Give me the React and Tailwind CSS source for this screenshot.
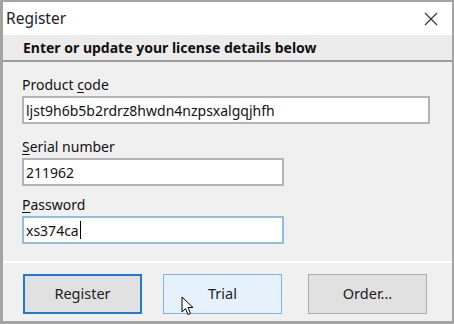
import React from "react";

const font = { fontFamily: '"Noto Sans", "Open Sans", sans-serif' };

function Field({ label, hotkey, rest, value, className = "", focused = false, caret = false }) {
  return (
    <div className={className}>
      <div className="text-[14px] leading-[18px] text-[#111] h-[18px]">
        {label.slice(0, hotkey)}
        <span className="underline underline-offset-2">{label[hotkey]}</span>
        {label.slice(hotkey + 1)}
      </div>
      <div
        className={`mt-[2px] h-[28px] bg-white flex items-center px-[2px] text-[14px] text-[#111] ${
          focused ? "border-2 border-[#8fbfdc]" : "border-2 border-[#b4b4b4]"
        } ${rest}`}
      >
        <span>{value}</span>
        {caret && <span className="inline-block w-px h-[18px] bg-black ml-px" />}
      </div>
    </div>
  );
}

export default function App() {
  return (
    <div style={font} className="w-[454px] h-[324px] bg-[#a3a3a3] pt-[2px] pl-[3px] pb-[3px] pr-[2px] overflow-hidden">
      <div className="h-full bg-[#f0f0f0] flex flex-col">
        {/* title bar */}
        <div className="h-[33px] bg-white flex items-center justify-between pl-[3px] pr-[12px]">
          <span className="text-[15.5px] text-[#222] leading-none">Register</span>
          <svg width="14" height="14" viewBox="0 0 14 14" className="mr-[2px]">
            <path d="M1 1 L13 13 M13 1 L1 13" stroke="#333" strokeWidth="1.2" />
          </svg>
        </div>

        {/* header band */}
        <div className="h-[27px] border-b-2 border-[#9c9c9c] bg-[#ececec] flex items-center pl-[20px]">
          <span className="text-[14px] font-bold text-[#111]">Enter or update your license details below</span>
        </div>

        {/* fields */}
        <div className="flex flex-col pl-[19px] pt-[14px]">
          <Field label="Product code" hotkey={8} value="ljst9h6b5b2rdrz8hwdn4nzpsxalgqjhfh" rest="w-[408px]" />
          <Field label="Serial number" hotkey={0} value="211962" rest="w-[262px]" className="mt-[14px]" />
          <Field label="Password" hotkey={0} value="xs374ca" rest="w-[262px]" className="mt-[10px]" focused caret />
        </div>

        {/* separator */}
        <div className="mt-[17px] h-[2px] bg-white" />

        {/* buttons */}
        <div className="flex items-start pl-[20px] pt-[11px]">
          <button className="w-[119px] h-[40px] bg-[#e1e1e1] border-2 border-[#1f7ad0] text-[14.5px] text-[#222]">
            Register
          </button>
          <button className="relative ml-[21px] w-[119px] h-[40px] bg-[#e5f1fb] border border-[#7eb4ea] text-[14.5px] text-[#222]">
            Trial
            <svg width="14" height="20" viewBox="0 0 14 20" className="absolute left-[17px] top-[21px]">
              <path d="M1 1 L1 16 L4.5 12.5 L7 18.5 L9.5 17.5 L7 11.5 L12 11.5 Z" fill="white" stroke="black" strokeWidth="1" strokeLinejoin="round" />
            </svg>
          </button>
          <button className="ml-[26px] w-[119px] h-[40px] bg-[#e1e1e1] border border-[#adadad] text-[14.5px] text-[#222]">
            Order...
          </button>
        </div>
      </div>
    </div>
  );
}
